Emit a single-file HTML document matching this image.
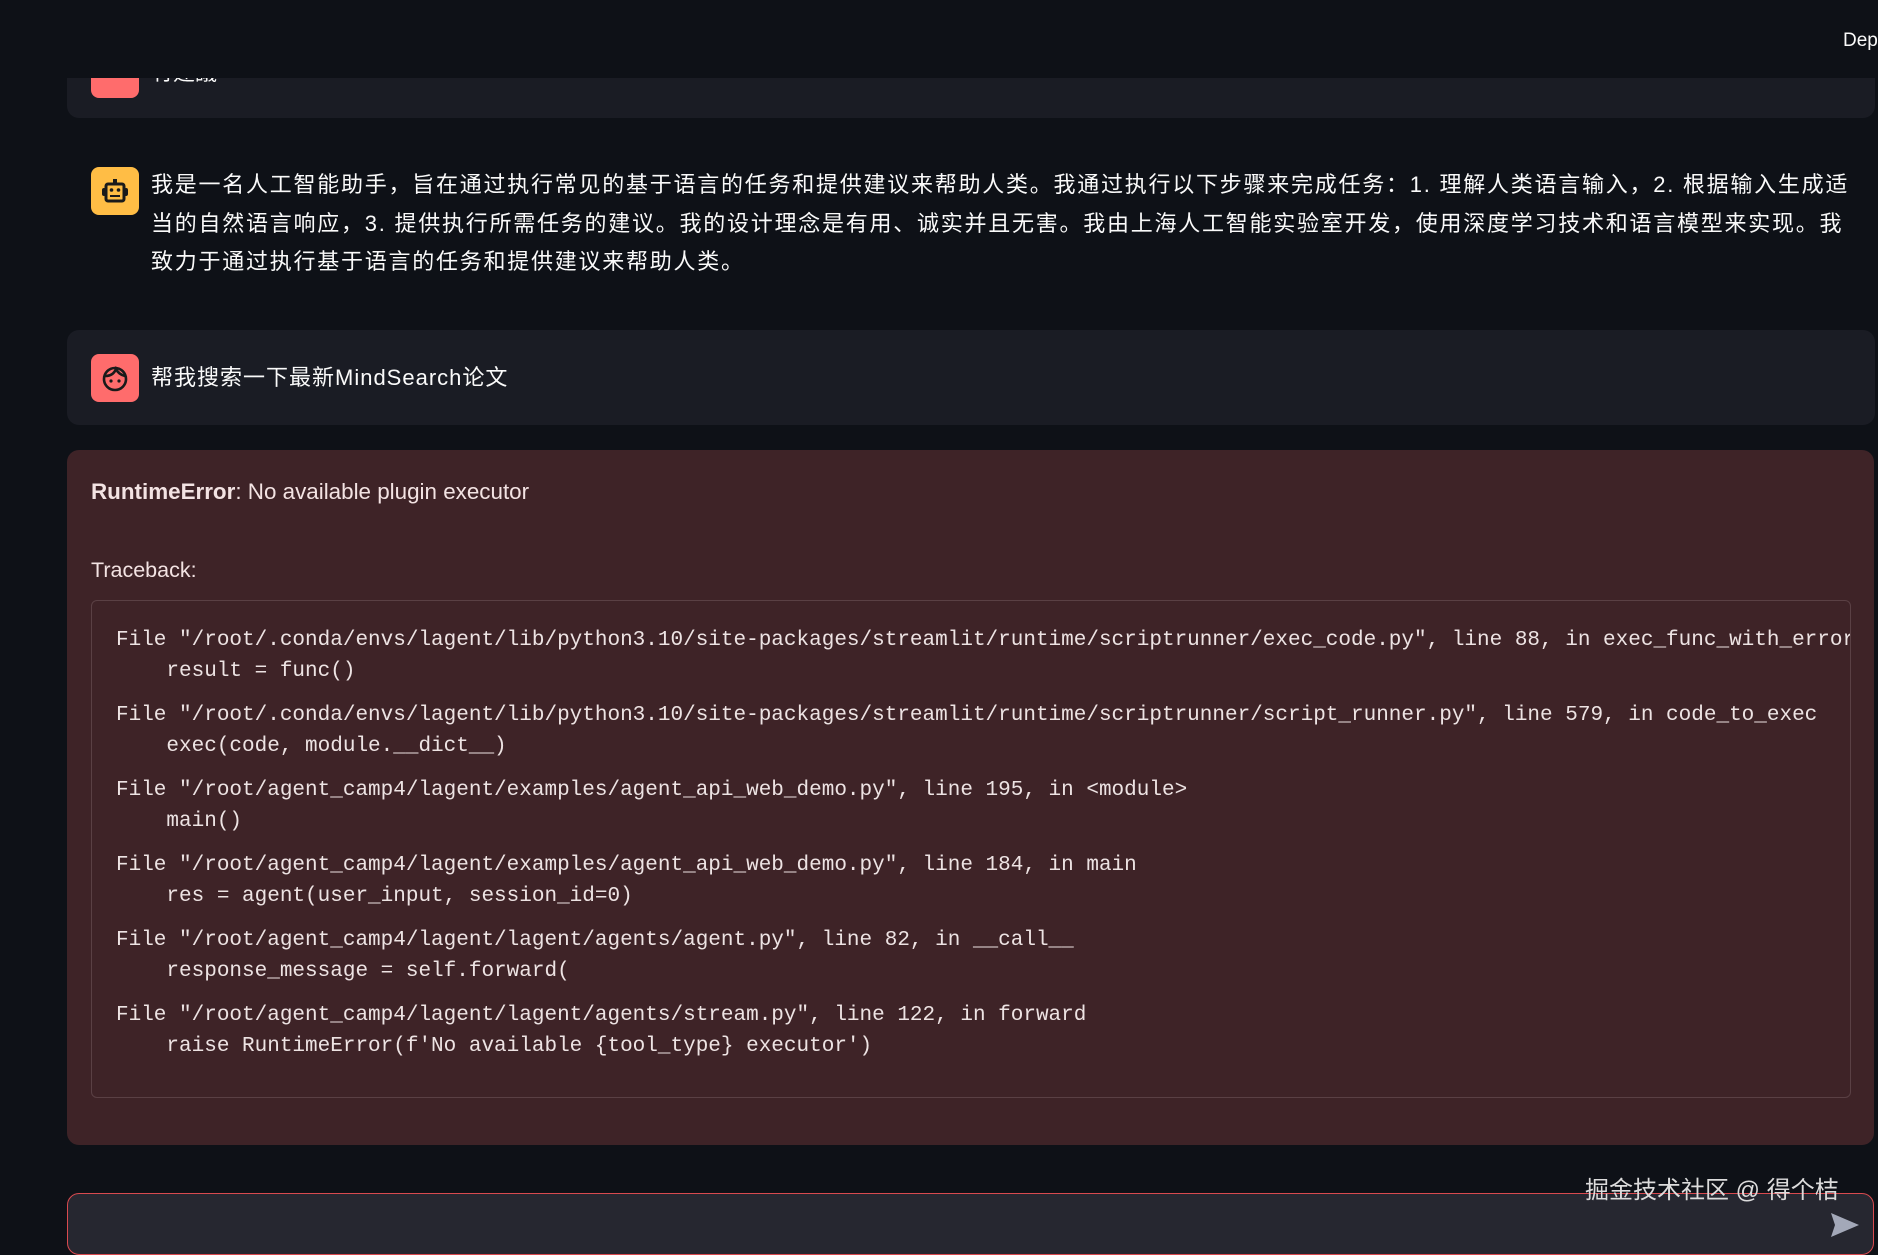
<!DOCTYPE html>
<html><head><meta charset="utf-8"><style>
body{margin:0;width:1878px;height:1236px;overflow:hidden;background:#0e1117;font-family:"Liberation Sans","Noto Sans CJK SC",sans-serif;color:#fafafa;position:relative}
.hdr{position:absolute;left:0;top:0;width:1878px;height:78px;background:#0e1117;z-index:5}
.hdr span{position:absolute;left:1843px;top:30px;font-size:19px;color:#fafafa}
.card{position:absolute;left:67px;width:1808px;background:#1a1c24;border-radius:12px}
.ic{position:absolute;width:48px;height:48px;border-radius:8px}
.txt{position:absolute;font-size:22px;white-space:nowrap;line-height:38.6px}
.err{position:absolute;left:67px;top:450px;width:1807px;height:695px;background:#3e2327;border-radius:12px;color:#f3e3e3}
.code{position:absolute;left:24px;top:150px;width:1758px;height:496px;border:1px solid #5a4044;border-radius:6px;overflow:hidden}
.code pre{margin:0;position:absolute;left:24px;font-family:"Liberation Mono",monospace;font-size:21px;line-height:31px;color:#ede3e3;white-space:pre}
.inp{position:absolute;left:67px;top:1193px;width:1805px;height:60px;background:#262730;border:1px solid #d94a4f;border-radius:12px}
</style></head><body>
<div class="hdr"><span>Dep</span></div>
<div class="card" style="top:40px;height:78px">
 <div class="ic" style="left:24px;top:10px;background:#ff6c6c"></div>
 <div class="txt" style="left:84px;top:14px">有建議</div>
</div>
<div class="ic" style="left:91px;top:167px;background:#ffbd45">
<svg width="48" height="48" viewBox="0 0 48 48"><g fill="none" stroke="#1a1a1a" stroke-width="3"><rect x="15" y="17" width="18" height="17" rx="2"/></g><rect x="22" y="12" width="4" height="5" fill="#1a1a1a"/><rect x="11" y="21" width="4" height="8" rx="2" fill="#1a1a1a"/><rect x="33" y="21" width="4" height="8" rx="2" fill="#1a1a1a"/><circle cx="20.5" cy="23" r="1.8" fill="#1a1a1a"/><circle cx="27.5" cy="23" r="1.8" fill="#1a1a1a"/><rect x="19" y="28" width="10" height="2" fill="#1a1a1a"/></svg>
</div>
<div class="txt" style="left:151px;top:166px;letter-spacing:1.75px">我是一名人工智能助手，旨在通过执行常见的基于语言的任务和提供建议来帮助人类。我通过执行以下步骤来完成任务：1. 理解人类语言输入，2. 根据输入生成适<br>当的自然语言响应，3. 提供执行所需任务的建议。我的设计理念是有用、诚实并且无害。我由上海人工智能实验室开发，使用深度学习技术和语言模型来实现。我<br>致力于通过执行基于语言的任务和提供建议来帮助人类。</div>
<div class="card" style="top:330px;height:95px">
 <div class="ic" style="left:24px;top:24px;background:#ff6c6c">
 <svg width="48" height="48" viewBox="0 0 48 48"><g fill="none" stroke="#1a1a1a" stroke-width="2.6"><circle cx="24" cy="25" r="11"/><path d="M14 22c5 0 9-2 11-7c2 4 5 6 9 7"/></g><circle cx="20" cy="27" r="1.6" fill="#1a1a1a"/><circle cx="28" cy="27" r="1.6" fill="#1a1a1a"/></svg>
 </div>
 <div class="txt" style="left:84px;top:29px;letter-spacing:1px">帮我搜索一下最新MindSearch论文</div>
</div>
<div class="err">
 <div class="txt" style="left:24px;top:23px;font-size:22.4px;color:#f3e3e3"><b>RuntimeError</b>: No available plugin executor</div>
 <div class="txt" style="left:24px;top:101px;font-size:21.5px;color:#f3e3e3">Traceback:</div>
 <div class="code">
<pre style="top:24px">File "/root/.conda/envs/lagent/lib/python3.10/site-packages/streamlit/runtime/scriptrunner/exec_code.py", line 88, in exec_func_with_error
    result = func()</pre>
<pre style="top:99px">File "/root/.conda/envs/lagent/lib/python3.10/site-packages/streamlit/runtime/scriptrunner/script_runner.py", line 579, in code_to_exec
    exec(code, module.__dict__)</pre>
<pre style="top:174px">File "/root/agent_camp4/lagent/examples/agent_api_web_demo.py", line 195, in &lt;module&gt;
    main()</pre>
<pre style="top:249px">File "/root/agent_camp4/lagent/examples/agent_api_web_demo.py", line 184, in main
    res = agent(user_input, session_id=0)</pre>
<pre style="top:324px">File "/root/agent_camp4/lagent/lagent/agents/agent.py", line 82, in __call__
    response_message = self.forward(</pre>
<pre style="top:399px">File "/root/agent_camp4/lagent/lagent/agents/stream.py", line 122, in forward
    raise RuntimeError(f'No available {tool_type} executor')</pre>
 </div>
</div>
<div class="inp">
 <svg style="position:absolute;left:1762px;top:18px" width="30" height="26" viewBox="0 0 30 26"><path d="M1 1L29 13L1 25L5 13Z" fill="#a3a8b8"/></svg>
</div>
<div class="txt" style="left:1585px;top:1172px;font-size:24px;color:#dcdcdc">掘金技术社区 @ 得个桔</div>
</body></html>
